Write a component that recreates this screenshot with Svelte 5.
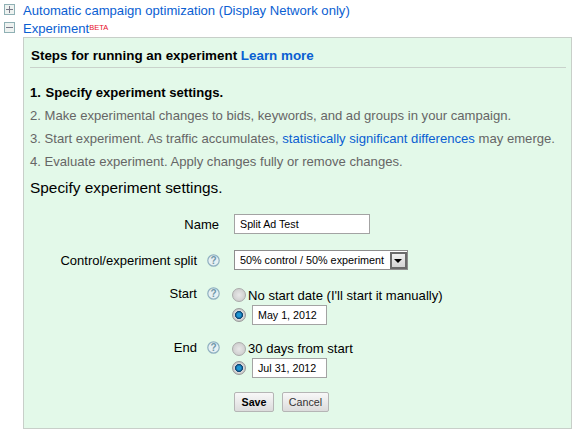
<script>
  const steps = [
    { text: "Make experimental changes to bids, keywords, and ad groups in your campaign." },
    { text: "Start experiment. As traffic accumulates, ", link: "statistically significant differences", after: " may emerge." },
    { text: "Evaluate experiment. Apply changes fully or remove changes." }
  ];
</script>

{#snippet help()}
  <svg class="help" width="13" height="13" viewBox="0 0 13 13">
    <circle cx="6.5" cy="6.5" r="5.7" fill="#e6f0f3" stroke="#8fb0c0" stroke-width="1.2" />
    <text x="6.5" y="10.2" text-anchor="middle">?</text>
  </svg>
{/snippet}

<div class="page">
  <div class="row">
    <span class="toggle"><span class="h"></span><span class="v"></span></span>
    <a href="#top">Automatic campaign optimization (Display Network only)</a>
  </div>
  <div class="row second">
    <span class="toggle"><span class="h"></span></span>
    <a href="#top">Experiment</a><sup>BETA</sup>
  </div>

  <div class="panel">
    <div class="heading">Steps for running an experiment <a href="#top">Learn more</a></div>
    <ol>
      <li class="current"><span>1.</span> Specify experiment settings.</li>
      {#each steps as step, i}
        <li>{i + 2}. {step.text}{#if step.link}<a href="#top">{step.link}</a>{step.after}{/if}</li>
      {/each}
    </ol>
    <h2>Specify experiment settings.</h2>

    <div class="form">
      <div class="label name">Name</div>
      <div class="field name"><div class="input wide">Split Ad Test</div></div>

      <div class="label split">Control/experiment split {@render help()}</div>
      <div class="field split">
        <div class="select">50% control / 50% experiment<span class="arrow"></span></div>
      </div>

      <div class="label">Start {@render help()}</div>
      <div class="field start">
        <div class="choice"><span class="radio"></span>No start date (I'll start it manually)</div>
        <div class="choice"><span class="radio on"></span><div class="input date">May 1, 2012</div></div>
      </div>

      <div class="label">End {@render help()}</div>
      <div class="field end">
        <div class="choice"><span class="radio"></span>30 days from start</div>
        <div class="choice"><span class="radio on"></span><div class="input date">Jul 31, 2012</div></div>
      </div>

      <div class="label"></div>
      <div class="buttons">
        <button class="save">Save</button>
        <button class="cancel">Cancel</button>
      </div>
    </div>
  </div>
</div>

<style>
  :global(body) {
    margin: 0;
    background: #fff;
    font-family: "Liberation Sans", Arial, sans-serif;
    color: #000;
  }
  a {
    color: #0a60d2;
    text-decoration: none;
  }
  .page {
    width: 581px;
    height: 437px;
    overflow: hidden;
    padding-top: 2px;
    box-sizing: border-box;
  }
  .row {
    display: flex;
    align-items: center;
    height: 17px;
    font-size: 13.1px;
    padding-left: 4px;
  }
  .second {
    height: 18px;
  }
  .toggle {
    position: relative;
    box-sizing: border-box;
    width: 11px;
    height: 11px;
    margin-top: -2px;
    border: 1px solid #8fb0b4;
    background: #eef2f0;
    margin-right: 8px;
    flex: none;
  }
  .h {
    position: absolute;
    left: 1px;
    right: 1px;
    top: 4px;
    height: 1px;
    background: #778;
  }
  .v {
    position: absolute;
    top: 1px;
    bottom: 1px;
    left: 4px;
    width: 1px;
    background: #778;
  }
  sup {
    color: #e8102a;
    font-size: 7.5px;
    align-self: flex-start;
    margin: 5px 0 0 0;
    line-height: 8px;
  }
  .panel {
    margin: 0 9px 0 23px;
    height: 392px;
    box-sizing: border-box;
    background: #e3f9e9;
    border: 1px solid #c8cfc9;
    padding: 10px 5px 0 6px;
  }
  .heading {
    font-size: 13.4px;
    font-weight: bold;
    padding: 0 0 4px 1px;
    border-bottom: 1px solid #c9d2cb;
  }
  ol {
    list-style: none;
    margin: 17px 0 0;
    padding: 0;
  }
  li {
    font-size: 13.1px;
    color: #666;
    height: 23px;
    line-height: 15px;
    white-space: nowrap;
  }
  .current {
    color: #000;
    font-weight: bold;
  }
  .current span {
    margin-right: 1px;
  }
  h2 {
    margin: 1px 0 0;
    font-size: 15.4px;
    font-weight: normal;
    line-height: 20px;
  }
  .form {
    display: grid;
    grid-template-columns: 190px 1fr;
    column-gap: 14px;
    margin-top: 16px;
    font-size: 13px;
  }
  .label {
    display: flex;
    justify-content: flex-end;
    align-items: flex-start;
    gap: 10px;
    padding-top: 1px;
    line-height: 16px;
  }
  .label.name {
    padding: 3px 1px 0 0;
  }
  .label.split {
    padding-top: 3px;
  }
  .help {
    flex: none;
    margin-top: 1px;
  }
  .input {
    box-sizing: border-box;
    background: #fff;
    border: 1px solid #a3a3a3;
    font-size: 10.7px;
    line-height: 18px;
    height: 20px;
    padding-left: 5px;
  }
  .help text {
    font-size: 10px;
    font-weight: bold;
    fill: #6f97a8;
  }
  .field.name {
    height: 36px;
  }
  .field.split {
    height: 35px;
  }
  .field.start {
    height: 54px;
  }
  .field.end {
    height: 53px;
  }
  .wide {
    width: 136px;
  }
  .date {
    width: 75px;
  }
  .select {
    box-sizing: border-box;
    display: flex;
    align-items: center;
    justify-content: space-between;
    width: 174px;
    height: 20px;
    background: #fff;
    border: 1px solid #8e8e8e;
    font-size: 10.8px;
    padding: 0 0 0 5px;
  }
  .arrow {
    position: relative;
    box-sizing: border-box;
    width: 17px;
    height: 17px;
    background: linear-gradient(#f0f0f0, #d4d4d4);
    border: 2px solid #6a6a6a;
  }
  .arrow::after {
    content: "";
    position: absolute;
    left: 2px;
    top: 5px;
    border: 4.5px solid transparent;
    border-top: 4.5px solid #000;
  }
  .choice {
    display: flex;
    align-items: center;
    height: 20px;
    margin-left: -2px;
    white-space: nowrap;
    font-size: 13.1px;
  }
  .field.end .choice:first-child {
    height: 19px;
  }
  .radio {
    box-sizing: border-box;
    width: 14px;
    height: 14px;
    border-radius: 50%;
    border: 1px solid #aaa;
    background: radial-gradient(circle at 50% 50%, #e8e8e8, #c6c6c6);
    margin-right: 2px;
    flex: none;
  }
  .radio.on {
    margin-right: 6px;
    background: radial-gradient(circle closest-side, #1f97d4 0 30%, #0a3f6c 62%, #dcdcdc 72%, #c4c4c4 100%);
    border-color: #999;
  }
  .buttons {
    display: flex;
    gap: 8px;
  }
  button {
    box-sizing: border-box;
    height: 20px;
    padding: 0;
    font-family: inherit;
    font-size: 10.7px;
    color: #333;
    background: linear-gradient(#f8f8f8, #dcdcdc);
    border: 1px solid #b5b5b5;
    border-radius: 2px;
  }
  .save {
    width: 40px;
    color: #000;
    font-weight: bold;
  }
  .cancel {
    width: 47px;
  }
</style>
